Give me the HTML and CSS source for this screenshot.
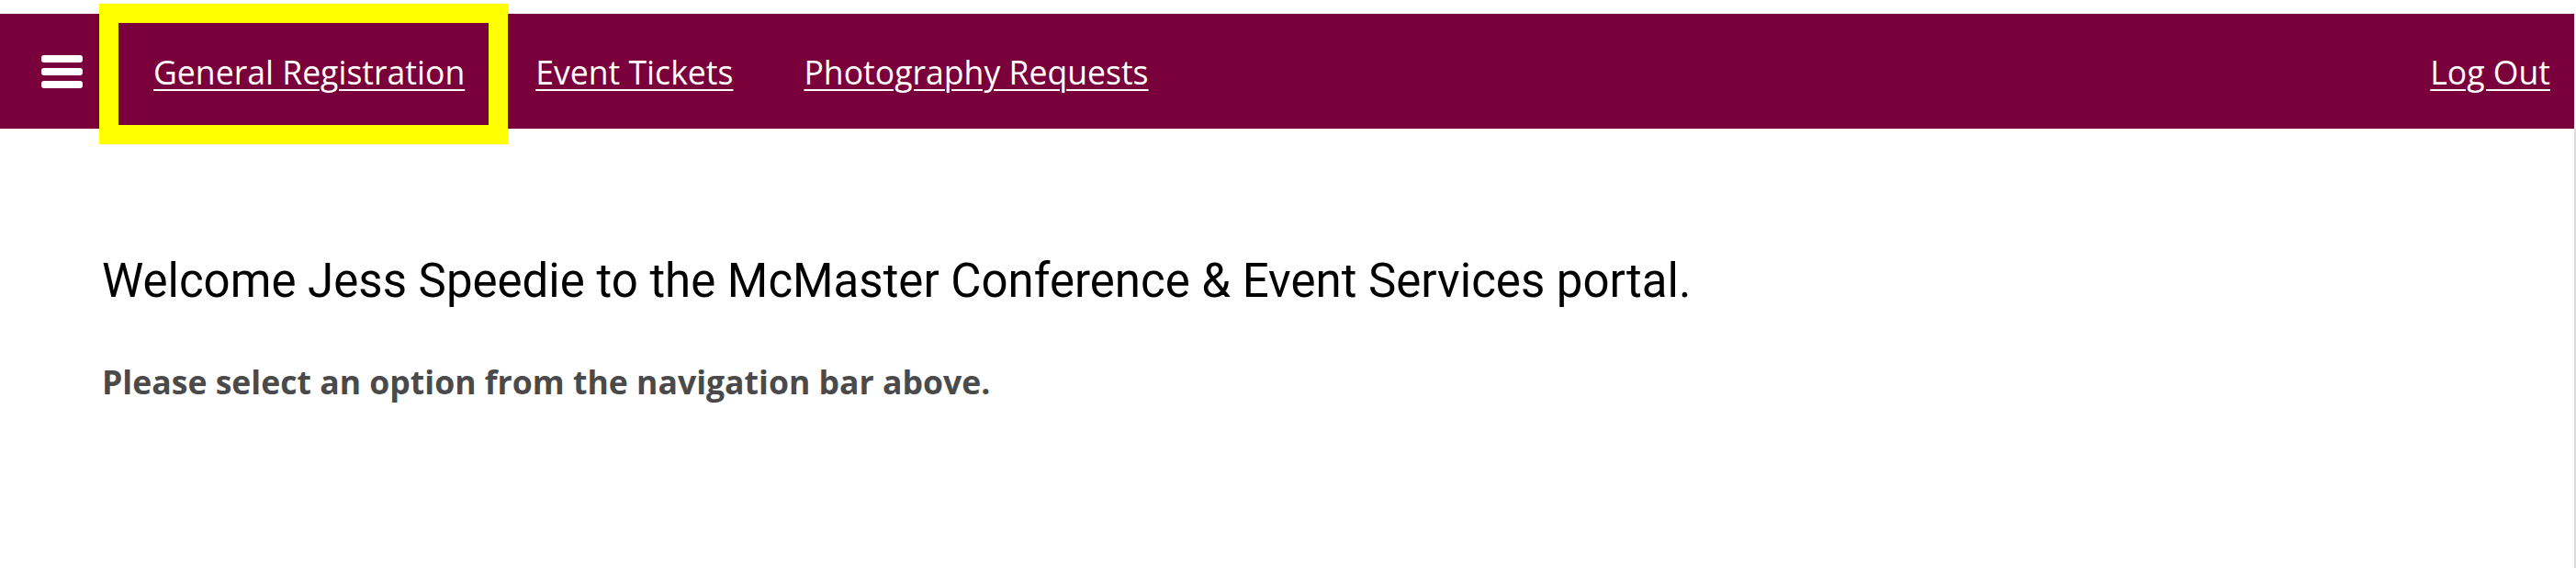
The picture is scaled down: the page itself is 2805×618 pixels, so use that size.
FILE: index.html
```html
<!DOCTYPE html>
<html lang="en">
<head>
<meta charset="utf-8">
<title>McMaster Conference &amp; Event Services</title>
<link rel="stylesheet" href="styles.css">
</head>
<body>
<div class="page">
  <header class="topbar">
    <nav class="nav">
      <button class="menu-btn" aria-label="Menu">
        <span class="menu-line"></span>
        <span class="menu-line"></span>
        <span class="menu-line"></span>
      </button>
      <a class="nav-link highlighted" href="#">General Registration<span class="highlight-box"></span></a>
      <a class="nav-link" href="#">Event Tickets</a>
      <a class="nav-link" href="#">Photography Requests</a>
    </nav>
    <a class="nav-link logout" href="#">Log Out</a>
  </header>
  <main class="content">
    <h1 class="welcome">Welcome Jess Speedie to the McMaster Conference &amp; Event Services portal.</h1>
    <p class="hint">Please select an option from the navigation bar above.</p>
  </main>
</div>
</body>
</html>
```

FILE: styles.css
```css
html, body {
  margin: 0;
  padding: 0;
  background: #ffffff;
}

.page {
  display: flex;
  flex-direction: column;
  min-height: 618px;
  padding-top: 15px;
  box-sizing: border-box;
}

.topbar {
  height: 125px;
  margin-right: 2px;
  background: #7a003c;
  display: flex;
  align-items: center;
  justify-content: space-between;
  padding: 0 26px 0 45px;
  font-family: "Open Sans", "Liberation Sans", sans-serif;
}

.nav {
  display: flex;
  align-items: center;
  gap: 77px;
}

.menu-btn {
  width: 45px;
  height: 36px;
  padding: 0;
  border: 0;
  background: transparent;
  display: flex;
  flex-direction: column;
  justify-content: space-between;
  cursor: pointer;
}

.menu-line {
  display: block;
  height: 8px;
  width: 45px;
  background: #ffffff;
  border-radius: 3px;
}

.nav-link {
  color: #ffffff;
  font-size: 35.6px;
  text-decoration: underline;
  text-decoration-thickness: 2px;
  text-underline-offset: 5px;
}

.highlighted {
  position: relative;
}

.highlight-box {
  position: absolute;
  left: -59px;
  right: -47px;
  top: -50px;
  bottom: -55px;
  border: 21px solid #ffff00;
  pointer-events: none;
}

.content {
  flex: 1;
  border-right: 2px solid #dcdcdc;
  padding: 136px 0 0 111px;
}

.welcome {
  margin: 0;
  font-family: Roboto, "Liberation Sans", sans-serif;
  font-weight: 400;
  font-size: 51px;
  line-height: 59px;
  color: #000000;
}

.hint {
  margin: 56px 0 0;
  font-family: "Open Sans", "Liberation Sans", sans-serif;
  font-weight: 700;
  font-size: 35.6px;
  color: #4a4a4a;
}
```
